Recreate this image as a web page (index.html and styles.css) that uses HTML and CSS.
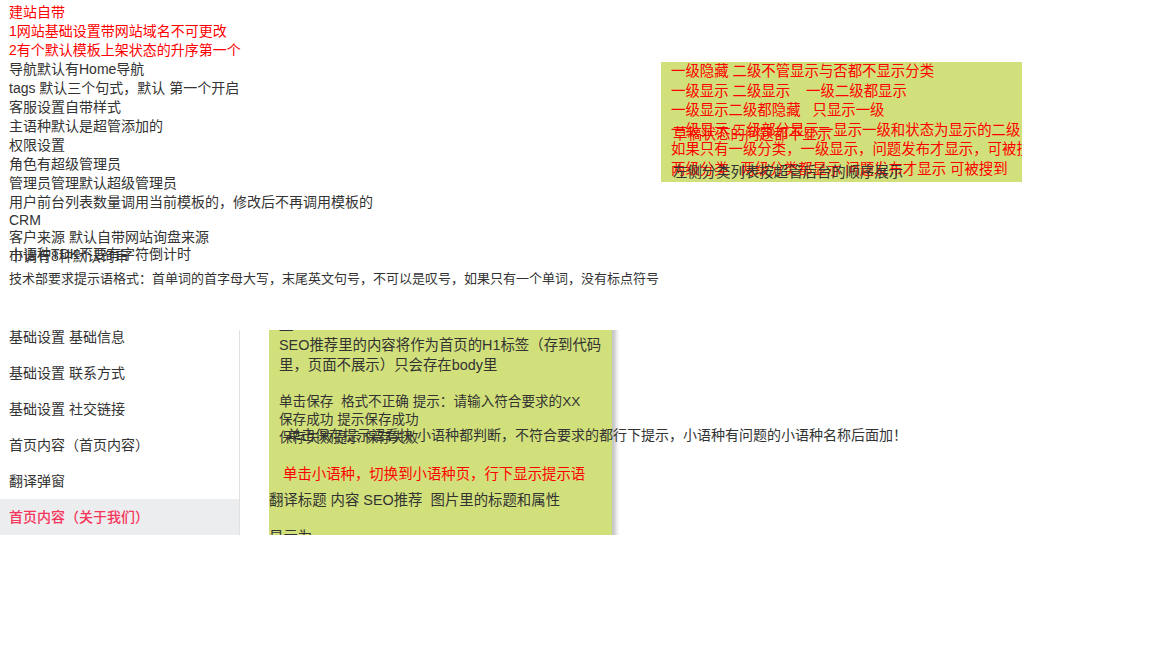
FILE: index.html
```html
<!DOCTYPE html>
<html lang="zh">
<head>
  <meta charset="UTF-8" />
  <title>建站自带</title>
  <link rel="stylesheet" href="styles.css">
</head>
<body>
  <div class="notes">
    <div class="red">建站自带</div>
    <div class="red">1网站基础设置带网站域名不可更改</div>
    <div class="red">2有个默认模板上架状态的升序第一个</div>
    <div>导航默认有Home导航</div>
    <div>tags 默认三个句式，默认 第一个开启</div>
    <div>客服设置自带样式</div>
    <div>主语种默认是超管添加的</div>
    <div>权限设置</div>
    <div>角色有超级管理员</div>
    <div>管理员管理默认超级管理员</div>
    <div>用户前台列表数量调用当前模板的，修改后不再调用模板的</div>
    <div class="latin">CRM</div>
    <div>客户来源 默认自带网站询盘来源</div>
    <div class="stacked">
      市调有8种默认询审
      <span class="overlay-line">小语种TDK不要有字符倒计时</span>
    </div>
  </div>

  <div class="tip-format">技术部要求提示语格式：首单词的首字母大写，末尾英文句号，不可以是叹号，如果只有一个单词，没有标点符号</div>

  <div class="sticky sticky-top">
    <div class="red sticky-lines">
      <div>一级隐藏 二级不管显示与否都不显示分类</div>
      <div>一级显示 二级显示 &nbsp;&nbsp; 一级二级都显示</div>
      <div>一级显示二级都隐藏 &nbsp; 只显示一级</div>
      <div>一级显示 二级部分显示一显示一级和状态为显示的二级</div>
      <div>如果只有一级分类，一级显示，问题发布才显示，可被搜到</div>
      <div>两级分类 &nbsp;&nbsp;两级分类都显示 问题发布才显示 可被搜到</div>
    </div>
    <div class="draft red">草稿状态的问题都不显示</div>
    <div class="side-order">左侧分类列表按超管后台的顺序展示</div>
  </div>

  <div class="panel">
    <ul class="side-menu">
      <li>基础设置 基础信息</li>
      <li>基础设置 联系方式</li>
      <li>基础设置 社交链接</li>
      <li>首页内容（首页内容）</li>
      <li>翻译弹窗</li>
      <li class="active">首页内容（关于我们）</li>
    </ul>
    <div class="panel-body">
      <div class="sticky sticky-seo">
        <div class="seo-head">
          <div>显</div>
          <div>SEO推荐里的内容将作为首页的H1标签（存到代码里，页面不展示）只会存在body里</div>
        </div>
        <div class="seo-save">
          <div>单击保存 &nbsp;格式不正确 提示：请输入符合要求的XX</div>
          <div>保存成功 提示保存成功</div>
          <div>保存失败提示 保存失败</div>
        </div>
        <div class="red seo-switch">单击小语种，切换到小语种页，行下显示提示语</div>
        <div class="seo-translate">翻译标题 内容 SEO推荐 &nbsp;图片里的标题和属性</div>
        <div class="seo-show">显示为</div>
      </div>
      <div class="save-note">单击保存提示语看快 小语种都判断，不符合要求的都行下提示，小语种有问题的小语种名称后面加！</div>
    </div>
  </div>
</body>
</html>
```

FILE: styles.css
```css
body {
  margin: 0;
  padding: 0;
  position: relative;
  height: 648px;
  overflow: hidden;
  background: #fff;
  color: #333;
  font-family: "Liberation Sans", "Noto Sans CJK SC", sans-serif;
  font-size: 14px;
  line-height: 19px;
}
.red { color: #f00; }

.notes { padding: 3px 0 0 9px; }
.latin { line-height: 16px; }
.stacked { position: relative; }
.overlay-line {
  position: absolute;
  left: 0;
  top: -2px;
}
.tip-format { margin: 3px 0 0 9px; font-size: 13px; }

.sticky { background: #d1e07b; font-size: 14.4px; }
.sticky-top {
  position: absolute;
  left: 661px;
  top: 62px;
  width: 361px;
  height: 120px;
  overflow: hidden;
}
.sticky-lines { padding: 0 0 0 10px; line-height: 19.6px; white-space: nowrap; }
.draft {
  position: absolute;
  left: 12px;
  top: 63px;
  white-space: nowrap;
}
.side-order {
  position: absolute;
  left: 12px;
  top: 101px;
  white-space: nowrap;
}

.panel {
  position: absolute;
  left: 0;
  top: 330px;
  width: 100%;
  height: 205px;
  display: flex;
  overflow: hidden;
}
.side-menu {
  list-style: none;
  margin: -11px 0 0;
  padding: 0;
  width: 239px;
  flex: none;
}
.side-menu li {
  height: 36px;
  line-height: 36px;
  padding-left: 9px;
}
.side-menu li.active {
  background: #ecedef;
  color: #f5365c;
  font-weight: 500;
}
.panel-body {
  flex: 1;
  border-left: 1px solid #e0e0e0;
  position: relative;
}
.sticky-seo {
  position: absolute;
  left: 29px;
  top: -20px;
  width: 343px;
  height: 300px;
  box-shadow: 4px 0 4px #c4c4c4;
}
.seo-head { padding: 0 10px; line-height: 20px; margin-top: 5px; }
.seo-save { padding: 0 10px; margin-top: 18px; line-height: 18px; font-size: 13.6px; }
.seo-switch { padding-left: 14px; margin-top: 18px; }
.seo-translate { margin-top: 7px; }
.seo-show { margin-top: 18px; }
.save-note {
  position: absolute;
  left: 47px;
  top: 96px;
  white-space: nowrap;
}
```
